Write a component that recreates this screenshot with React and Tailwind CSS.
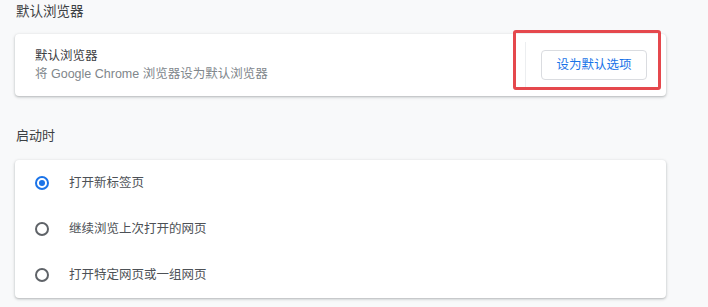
export default function App() {
  const font = { fontFamily: '"Liberation Sans", "Noto Sans CJK SC", "Noto Sans", sans-serif' };
  const radios = [
    { label: "打开新标签页", checked: true },
    { label: "继续浏览上次打开的网页", checked: false },
    { label: "打开特定网页或一组网页", checked: false },
  ];
  return (
    <div className="w-[708px] h-[307px] bg-[#f8f9fa] overflow-hidden" style={font}>
      <div className="pl-[15px] w-[666px]">
        <div className="h-[34px] pt-[3px] pl-[1px] text-[13.5px] leading-[18px] text-[#3c4043]">默认浏览器</div>
        <div className="relative h-[62px] bg-white rounded-[4px] shadow-[0_1px_2px_rgba(60,64,67,0.25),0_1px_3px_1px_rgba(60,64,67,0.1)] flex items-center pl-[20px] pr-[19px]">
          <div className="flex-1 flex flex-col gap-[1px]">
            <div className="text-[12.5px] leading-[17px] text-[#3c4043]">默认浏览器</div>
            <div className="text-[12.5px] leading-[17px] text-[#80868b]">将 Google Chrome 浏览器设为默认浏览器</div>
          </div>
          <div className="h-[46px] border-l border-[#eceef0] mr-[15px]"></div>
          <button className="w-[106px] h-[30px] rounded-[4px] border border-[#dadce0] bg-white text-[12.5px] text-[#1a73e8] flex items-center justify-center">
            设为默认选项
          </button>
          <div className="absolute left-[498px] top-[-4px] w-[148px] h-[60px] border-[3px] border-[#e5484d] rounded-[3px]"></div>
        </div>
        <div className="h-[64px] pt-[31px] pl-[1px] text-[13px] leading-[18px] text-[#3c4043]">启动时</div>
        <div className="h-[138px] bg-white rounded-[4px] shadow-[0_1px_2px_rgba(60,64,67,0.25),0_1px_3px_1px_rgba(60,64,67,0.1)] flex flex-col">
          {radios.map((r) => (
            <div key={r.label} className="h-[46px] flex items-center pl-[20px]">
              {r.checked ? (
                <div className="w-[14px] h-[14px] rounded-full border-[2px] border-[#1a73e8] flex items-center justify-center">
                  <div className="w-[6px] h-[6px] rounded-full bg-[#1a73e8]"></div>
                </div>
              ) : (
                <div className="w-[14px] h-[14px] rounded-full border-[2px] border-[#5f6368]"></div>
              )}
              <div className="ml-[20px] text-[12.5px] text-[#4d5156]">{r.label}</div>
            </div>
          ))}
        </div>
      </div>
    </div>
  );
}
